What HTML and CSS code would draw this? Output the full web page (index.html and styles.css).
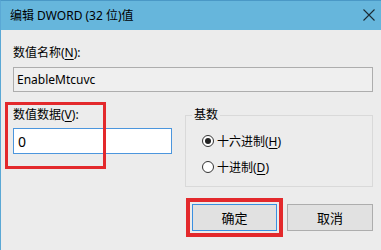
FILE: index.html
```html
<!DOCTYPE html>
<html lang="zh-CN">
<head>
    <meta charset="UTF-8">
    <title>编辑 DWORD (32 位)值</title>
    <link rel="stylesheet" href="styles.css">
</head>
<body>
    <div class="dialog">
        <div class="titlebar">
            <span class="title">编辑 DWORD (32 位)值</span>
            <svg class="close" width="12" height="12" viewBox="0 0 12 12">
                <path d="M0.5 0.5 L11.5 11.5 M11.5 0.5 L0.5 11.5" stroke="#1b2a33" stroke-width="1.1" fill="none"/>
            </svg>
        </div>
        <div class="content">
            <label class="field-label">数值名称(<u>N</u>):</label>
            <input class="name-input" type="text" value="EnableMtcuvc" readonly>

            <div class="row">
                <div class="value-col">
                    <label class="field-label">数值数据(<u>V</u>):</label>
                    <input class="value-input" type="text" value="0">
                    <!-- 红框标注 -->
                    <div class="mark"></div>
                </div>
                <fieldset class="base">
                    <legend>基数</legend>
                    <label class="radio"><input type="radio" name="base" checked><span>十六进制(<u>H</u>)</span></label>
                    <label class="radio"><input type="radio" name="base"><span>十进制(<u>D</u>)</span></label>
                </fieldset>
            </div>

            <div class="buttons">
                <button class="btn btn-default">确定</button>
                <button class="btn">取消</button>
            </div>
        </div>
    </div>
</body>
</html>
```

FILE: styles.css
```css
* {
    margin: 0;
    padding: 0;
    box-sizing: border-box;
}
body {
    font-family: "Noto Sans", "Noto Sans CJK SC", sans-serif;
    font-size: 12px;
    color: #000;
    background: #ececec;
}
.dialog {
    width: 381px;
    height: 250px;
    overflow: hidden;
    background: #ececec;
    border-top: 1px solid #4a98c6;
    border-left: 1px solid #5aa8d5;
}
.titlebar {
    height: 29px;
    background: #66b6dc;
    display: flex;
    align-items: center;
    justify-content: space-between;
    padding: 0 6px 0 9px;
}
.title {
    line-height: 16px;
}
.close {
    display: block;
    margin-top: -1px;
}
.content {
    padding: 15px 8px 0 12px;
}
.field-label {
    display: block;
    line-height: 16px;
}
u {
    text-decoration: underline;
    text-underline-offset: 2px;
}
.name-input {
    display: block;
    width: 360px;
    height: 25px;
    margin-top: 6px;
    padding: 0 3px;
    border: 1px solid #adadad;
    background: #efefef;
    font: inherit;
    color: #000;
    outline: none;
}
.row {
    display: flex;
    gap: 13px;
    margin-top: 15px;
}
.value-col {
    position: relative;
    width: 159px;
}
.value-input {
    display: block;
    width: 159px;
    height: 26px;
    margin-top: 5px;
    padding: 0 4px;
    border: 1px solid #4c96dd;
    background: #fff;
    font-family: "Noto Sans", sans-serif;
    font-size: 14px;
    color: #000;
    outline: none;
}
.mark {
    position: absolute;
    left: -8px;
    top: -5px;
    width: 101px;
    height: 67px;
    border: 3px solid #e3292c;
    pointer-events: none;
}
.base {
    width: 188px;
    height: 80px;
    border: 1px solid #d9d9d9;
    padding: 0 6px 9px 6px;
    display: flex;
    flex-direction: column;
    gap: 6px;
}
.base legend {
    padding: 0 2px;
    line-height: 16px;
}
.radio {
    display: flex;
    align-items: center;
    height: 20px;
    gap: 3px;
    padding-left: 10px;
}
.radio:first-of-type {
    margin-top: 8px;
}
.radio input {
    appearance: none;
    width: 12px;
    height: 12px;
    border: 1px solid #333;
    border-radius: 50%;
    background: #fff;
    display: grid;
    place-items: center;
}
.radio input:checked::after {
    content: "";
    width: 6px;
    height: 6px;
    border-radius: 50%;
    background: #222;
}
.buttons {
    display: flex;
    justify-content: flex-end;
    gap: 10px;
    margin-top: 17px;
}
.btn {
    width: 86px;
    height: 27px;
    background: #e1e1e1;
    border: 1px solid #adadad;
    font: inherit;
    font-size: 13px;
    color: #000;
}
.btn-default {
    width: 85px;
    border-color: #3a8fe0;
    outline: 4px solid #e3292c;
    outline-offset: 2px;
}
```
